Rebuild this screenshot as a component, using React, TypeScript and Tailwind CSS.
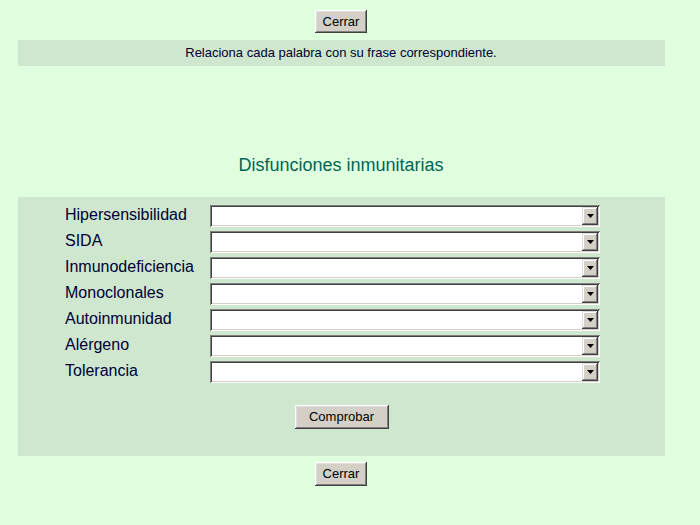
import React from 'react';

const terms = [
  'Hipersensibilidad',
  'SIDA',
  'Inmunodeficiencia',
  'Monoclonales',
  'Autoinmunidad',
  'Alérgeno',
  'Tolerancia',
];

// Classic raised button
const Button: React.FC<{ label: string; className?: string }> = ({ label, className }) => (
  <button
    className={
      'flex items-center justify-center bg-[#d4d0c8] text-[13px] text-black ' +
      'shadow-[inset_-1px_-1px_#404040,inset_1px_1px_#ffffff,inset_-2px_-2px_#808080,inset_2px_2px_#dfdfdf] ' +
      (className ?? '')
    }
  >
    {label}
  </button>
);

// Fake dropdown drawn like an old sunken select box
const Dropdown: React.FC = () => (
  <div className="flex h-[22px] w-[390px] items-stretch bg-white p-[2px] shadow-[inset_1px_1px_#808080,inset_-1px_-1px_#ffffff,inset_2px_2px_#404040,inset_-2px_-2px_#d4d0c8]">
    <div className="flex-1" />
    <div className="flex w-[16px] items-center justify-center bg-[#d4d0c8] shadow-[inset_-1px_-1px_#404040,inset_1px_1px_#dfdfdf,inset_-2px_-2px_#808080,inset_2px_2px_#ffffff]">
      <svg width="7" height="4" viewBox="0 0 7 4">
        <path d="M0 0h7L3.5 4z" fill="#000" />
      </svg>
    </div>
  </div>
);

export default function App() {
  return (
    <div
      className="h-[525px] w-[700px] bg-[#dfffdf] text-[#000033]"
      style={{ fontFamily: '"Liberation Sans", Arial, sans-serif' }}
    >
      <div className="flex w-[682px] flex-col items-center pt-[10px]">
        <Button label="Cerrar" className="h-[23px] w-[52px]" />

        {/* Instructions */}
        <div className="mt-[7px] flex h-[26px] w-[647px] items-center justify-center bg-[#cfe6cf] text-[13px]">
          Relaciona cada palabra con su frase correspondiente.
        </div>

        {/* Title */}
        <h2 className="mt-[89px] mb-[22px] text-[18px] leading-[20px] text-[#006655]">
          Disfunciones inmunitarias
        </h2>

        {/* Matching panel */}
        <div className="ml-[1px] flex h-[259px] w-[647px] flex-col bg-[#cfe6cf] pt-[8px] pl-[47px]">
          <div className="flex flex-col gap-[4px]">
            {terms.map((t) => (
              <div key={t} className="flex items-start">
                <span className="w-[145px] pt-[1px] text-[16px] leading-[17px]">{t}</span>
                <Dropdown />
              </div>
            ))}
          </div>
          <div className="mt-[22px] flex justify-center pr-[47px]">
            <Button label="Comprobar" className="h-[24px] w-[94px]" />
          </div>
        </div>

        <Button label="Cerrar" className="mt-[6px] h-[24px] w-[52px]" />
      </div>
    </div>
  );
}
